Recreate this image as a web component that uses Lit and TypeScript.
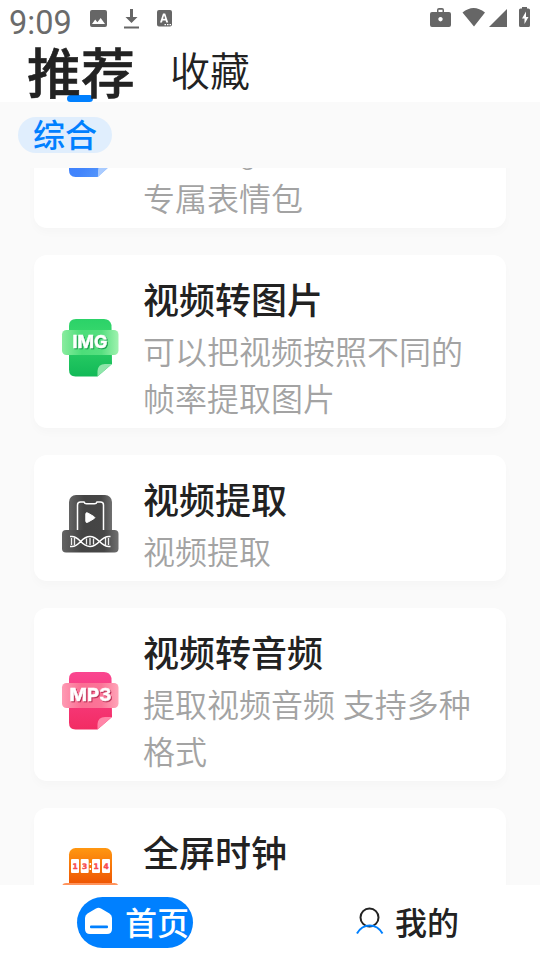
import { LitElement, html, css, svg } from "lit";
import { customElement, property } from "lit/decorators.js";

const icons: Record<string, unknown> = {
  gif: svg`
    <defs><linearGradient id="bl" x1="0" y1="0" x2="1" y2="1"><stop offset="0" stop-color="#3a7bff" /><stop offset=".6" stop-color="#4285fc" /><stop offset="1" stop-color="#5fa0fb" /></linearGradient></defs>
    <path d="M13.500 1H43q6 0 7 5v40L35.500 59H13.500Q7 59 7 52V8q0-7 6.500-7Z" fill="url(#bl)" />
    <path d="M50 46h-7q-7 0-7 7v6Z" fill="#a9cbff" />`,
  img: svg`
    <defs>
      <linearGradient id="gr" x1="0" y1="0" x2="0" y2="1"><stop offset="0" stop-color="#2bd268" /><stop offset=".25" stop-color="#36d76c" /><stop offset="1" stop-color="#12b957" /></linearGradient>
      <linearGradient id="grb" x1="0" y1="0" x2="1" y2="0"><stop offset="0" stop-color="#8aec9f" /><stop offset=".35" stop-color="#4cdd79" /><stop offset=".7" stop-color="#56df80" /><stop offset="1" stop-color="#a0f2af" /></linearGradient>
    </defs>
    <path d="M14 1H42q6 0 7.500 6l.5 39L35.500 58.500H13.500Q7 58.500 7 51.500V8q0-7 7-7Z" fill="url(#gr)" />
    <path d="M50 46h-7q-7 0-7.500 7v5.500Z" fill="#8fe5aa" />
    <rect x="0" y="12" width="56.500" height="25" rx="4.500" fill="url(#grb)" />
    <text class="label green" x="28" y="30" text-anchor="middle" textLength="35" lengthAdjust="spacingAndGlyphs">IMG</text>`,
  mp3: svg`
    <defs>
      <linearGradient id="pk" x1="0" y1="0" x2="0" y2="1"><stop offset="0" stop-color="#fa4690" /><stop offset="1" stop-color="#f22c63" /></linearGradient>
      <linearGradient id="pkb" x1="0" y1="0" x2="1" y2="0"><stop offset="0" stop-color="#fe9bb4" /><stop offset=".35" stop-color="#fb6e93" /><stop offset=".7" stop-color="#fb7598" /><stop offset="1" stop-color="#ffa5b8" /></linearGradient>
    </defs>
    <path d="M14 1H42q6 0 7.500 6l.5 39L35.500 58.500H13.500Q7 58.500 7 51.500V8q0-7 7-7Z" fill="url(#pk)" />
    <path d="M50 46h-7q-7 0-7.500 7v5.500Z" fill="#ff86a8" />
    <rect x="0" y="12" width="56.500" height="25" rx="4.500" fill="url(#pkb)" />
    <text class="label red" x="28.500" y="30" text-anchor="middle" textLength="42" lengthAdjust="spacingAndGlyphs">MP3</text>`,
  extract: svg`
    <defs>
      <linearGradient id="dk" x1="0" y1="0" x2="1" y2="0"><stop offset="0" stop-color="#646464" /><stop offset=".35" stop-color="#444" /><stop offset=".75" stop-color="#464646" /><stop offset="1" stop-color="#707070" /></linearGradient>
    </defs>
    <rect x="7" y="1" width="43" height="45" rx="7" fill="url(#dk)" />
    <path d="M15.500 36V11q0-3 3-3h3.500q.6 1.800 2.500 1.800h8q1.900 0 2.500-1.800H38.500q3 0 3 3v25" fill="none" stroke="#fff" stroke-width="1.500" />
    <path d="M23.800 20q0-2 2-1l6 3.500q2 1 0 2.300l-6 3.400q-2 1-2-1Z" fill="#fff" stroke="#fff" stroke-width="1" />
    <rect x="0" y="36" width="56.500" height="22.500" rx="4" fill="url(#dk)" />
    <path d="M8 42.500h2C18 42.500 19 52.500 28 52.500S38 42.500 47 42.500h1.500M8 52.500h2C18 52.500 19 42.500 28 42.500S38 52.500 47 52.500h1.500" fill="none" stroke="#fff" stroke-width="1.500" />
    <path d="M9.500 44v7M12.500 44v7M24.500 44.500v6M28 44v7M31.500 44.500v6M43.500 44v7M46.500 44v7" stroke="#eee" stroke-width="1.300" />`,
  clock: svg`
    <defs><linearGradient id="or" x1="0" y1="0" x2="0" y2="1"><stop offset="0" stop-color="#ff9711" /><stop offset=".75" stop-color="#ee5503" /></linearGradient></defs>
    <rect x="7" y="1" width="43" height="48" rx="6.500" fill="url(#or)" />
    <g fill="#fff"><rect x="9" y="12" width="8" height="14" rx="1" /><rect x="18.700" y="12" width="8" height="14" rx="1" /><rect x="30" y="12" width="8" height="14" rx="1" /><rect x="40" y="12" width="8" height="14" rx="1" /><rect x="27.600" y="16" width="1.500" height="2" /><rect x="27.600" y="21" width="1.500" height="2" /></g>
    <g class="digits" text-anchor="middle" fill="#f84a50"><text x="13" y="21.600">1</text><text x="22.700" y="21.600">3</text><text x="34" y="21.600">1</text><text x="44" y="21.600">4</text></g>
    <rect x="0" y="36" width="56.500" height="22" rx="4" fill="#ff935b" />`,
};

@customElement("tool-card")
class ToolCard extends LitElement {
  @property() icon = "";
  @property() name = "";
  @property() desc = "";

  static styles = css`
    :host { display: flex; align-items: center; box-sizing: border-box; width: 472px; flex: none;
      padding: 17px 28px 4px; background: #fff; border-radius: 13px; box-shadow: 0 5px 9px rgba(0, 0, 0, .018); }
    svg { width: 58px; height: 60px; flex: none; margin: 0 23px 1px 0; overflow: visible; }
    .label { font: 700 18px Inter, sans-serif; fill: #fff; stroke: #fff; stroke-width: .5px; }
    .green { filter: drop-shadow(1px 1px 0.5px #179a49); }
    .red { filter: drop-shadow(1px 1px 0.5px #b52a50); }
    .digits text { font: 700 7.500px "DejaVu Sans", sans-serif; stroke: #f84a50; stroke-width: .4px; }
    .name { font-size: 36px; font-weight: 500; line-height: 52px; color: #222; white-space: nowrap; margin-bottom: 6px; }
    .desc { font-family: Roboto, "Noto Sans CJK SC", sans-serif; font-size: 32px; font-weight: 350; line-height: 47px; color: #a3a3a3; width: 334px; white-space: pre-line; }
    .copy { display: flex; flex-direction: column; }
  `;

  render() {
    return html`<svg viewBox="0 0 58 60">${icons[this.icon]}</svg>
      <div class="copy"><div class="name">${this.name}</div><div class="desc">${this.desc}</div></div>`;
  }
}

@customElement("app-root")
class AppRoot extends LitElement {
  static styles = css`
    :host { display: flex; flex-direction: column; width: 540px; height: 960px; overflow: hidden; background: #fafafa;
      font-family: "Noto Sans CJK SC", sans-serif; color: #222; }
    .head { background: #fff; height: 102px; flex: none; }
    .status { display: flex; height: 39px; }
    .time { font: 400 32.500px/46px Roboto, sans-serif; color: #6b6b6b; width: 80px; padding-left: 9px; box-sizing: border-box; }
    .status svg { width: 460px; height: 39px; fill: #666; }
    .tabs { display: flex; height: 63px; }
    .tab { white-space: nowrap; }
    .on { position: relative; z-index: 0; font-size: 54px; font-weight: 500; line-height: 63px; -webkit-text-stroke: .6px #222; margin-left: 27px; width: 143px; }
    .on::after { content: ""; position: absolute; z-index: -1; left: 40px; top: 56px; width: 26px; height: 7px; border-radius: 3.500px; background: #0080ff; }
    .off { font-size: 40px; font-weight: 350; line-height: 60px; }
    .filters { height: 66px; flex: none; display: flex; padding: 15px 18px; box-sizing: border-box; }
    .chip { width: 94px; height: 36px; border-radius: 18px; background: #e0eefd; color: #0080ff; font-size: 32px; font-weight: 500; line-height: 32px; text-align: center; }
    .view { height: 717px; flex: none; overflow: hidden; display: flex; flex-direction: column; }
    .list { display: flex; flex-direction: column; gap: 27px; margin: -113px 0 0 34px; }
    .nav { height: 75px; flex: none; background: #fff; display: flex; align-items: center; }
    .item { display: flex; align-items: center; height: 51px; font-size: 32px; line-height: 47px; font-weight: 500; box-sizing: border-box; white-space: nowrap; }
    .item span { margin-top: -2px; }
    .home { width: 116px; margin: 0 163px 0 77px; padding-left: 7px; gap: 12px; border-radius: 26px; background: #0080ff; color: #fff; }
    .me { gap: 10px; }
    .item svg { width: 29px; height: 30px; flex: none; margin-top: -3px; }
  `;

  render() {
    return html`
      <div class="head">
        <div class="status">
          <div class="time">9:09</div>
          <svg viewBox="80 0 460 39">
            <path fill-rule="evenodd" d="M92 10h13q2 0 2 2v13q0 2-2 2H92q-2 0-2-2V12q0-2 2-2Zm0 14h13l-4.300-6-3.300 4.200-2.200-2.700Z" />
            <path d="M130 9h3v8h4.500l-6 6-6-6h4.500ZM124 26.500h15v2h-15Z" />
            <path fill-rule="evenodd" d="M159 10h11q2 0 2 2v12.500q0 2-2 2h-11q-2 0-2-2V12q0-2 2-2Zm4 3.500-3 9h2l.6-2h3l.6 2h2l-3-9Zm0 5.200 1.100-3.200 1.100 3.200ZM164.500 24v1.300h1.500V24Zm2.500 0v1.300h1.500V24Zm2.500 0v1.300h1.500V24Z" />
            <path fill-rule="evenodd" d="M437 12v-2q0-2 2-2h3q2 0 2 2v2h5q2 0 2 2v11q0 2-2 2h-17q-2 0-2-2V14q0-2 2-2Zm1.500 0h4v-2.300h-4Zm2 5a2.200 2.200 0 1 0 .01 0Z" />
            <path d="M462.500 12.500q11-9 22.500 0L474 26.500ZM507 9v18h-18Z" />
            <path fill-rule="evenodd" d="M522 8.500v-1.500h5v1.500h1.500q1.500 0 1.500 1.500v15.500q0 1.500-1.500 1.500h-8q-1.500 0-1.500-1.500V10q0-1.500 1.500-1.500Zm4 3-4 7h2.500v5.500l4-7H526Z" />
          </svg>
        </div>
        <div class="tabs"><div class="tab on">推荐</div><div class="tab off">收藏</div></div>
      </div>
      <div class="filters"><div class="chip">综合</div></div>
      <div class="view"><div class="list">
        <tool-card icon="gif" name="视频转动图" .desc=${"可以做gif\n专属表情包"}></tool-card>
        <tool-card icon="img" name="视频转图片" desc="可以把视频按照不同的帧率提取图片"></tool-card>
        <tool-card icon="extract" name="视频提取" desc="视频提取"></tool-card>
        <tool-card icon="mp3" name="视频转音频" desc="提取视频音频 支持多种格式"></tool-card>
        <tool-card icon="clock" name="全屏时钟" desc="全屏时钟"></tool-card>
      </div></div>
      <div class="nav">
        <div class="item home">
          <svg viewBox="0 0 29 30"><path fill="#fff" d="M12 2.500q2.500-1.500 5 0l8.500 5Q28 9 28 12v11q0 5-5 5H6q-5 0-5-5V12q0-3 2.500-4.500Z" /><rect x="6" y="19.500" width="18" height="2.700" rx="1" fill="#0080ff" /></svg>
          <span>首页</span>
        </div>
        <div class="item me">
          <svg viewBox="0 0 29 30"><circle cx="13.500" cy="11.500" r="9" fill="none" stroke="#222" stroke-width="2" /><path d="M1 27.500Q5.500 19.500 13.700 19.500T26.500 27.500" fill="none" stroke="#0080ff" stroke-width="2" /></svg>
          <span>我的</span>
        </div>
      </div>`;
  }
}
